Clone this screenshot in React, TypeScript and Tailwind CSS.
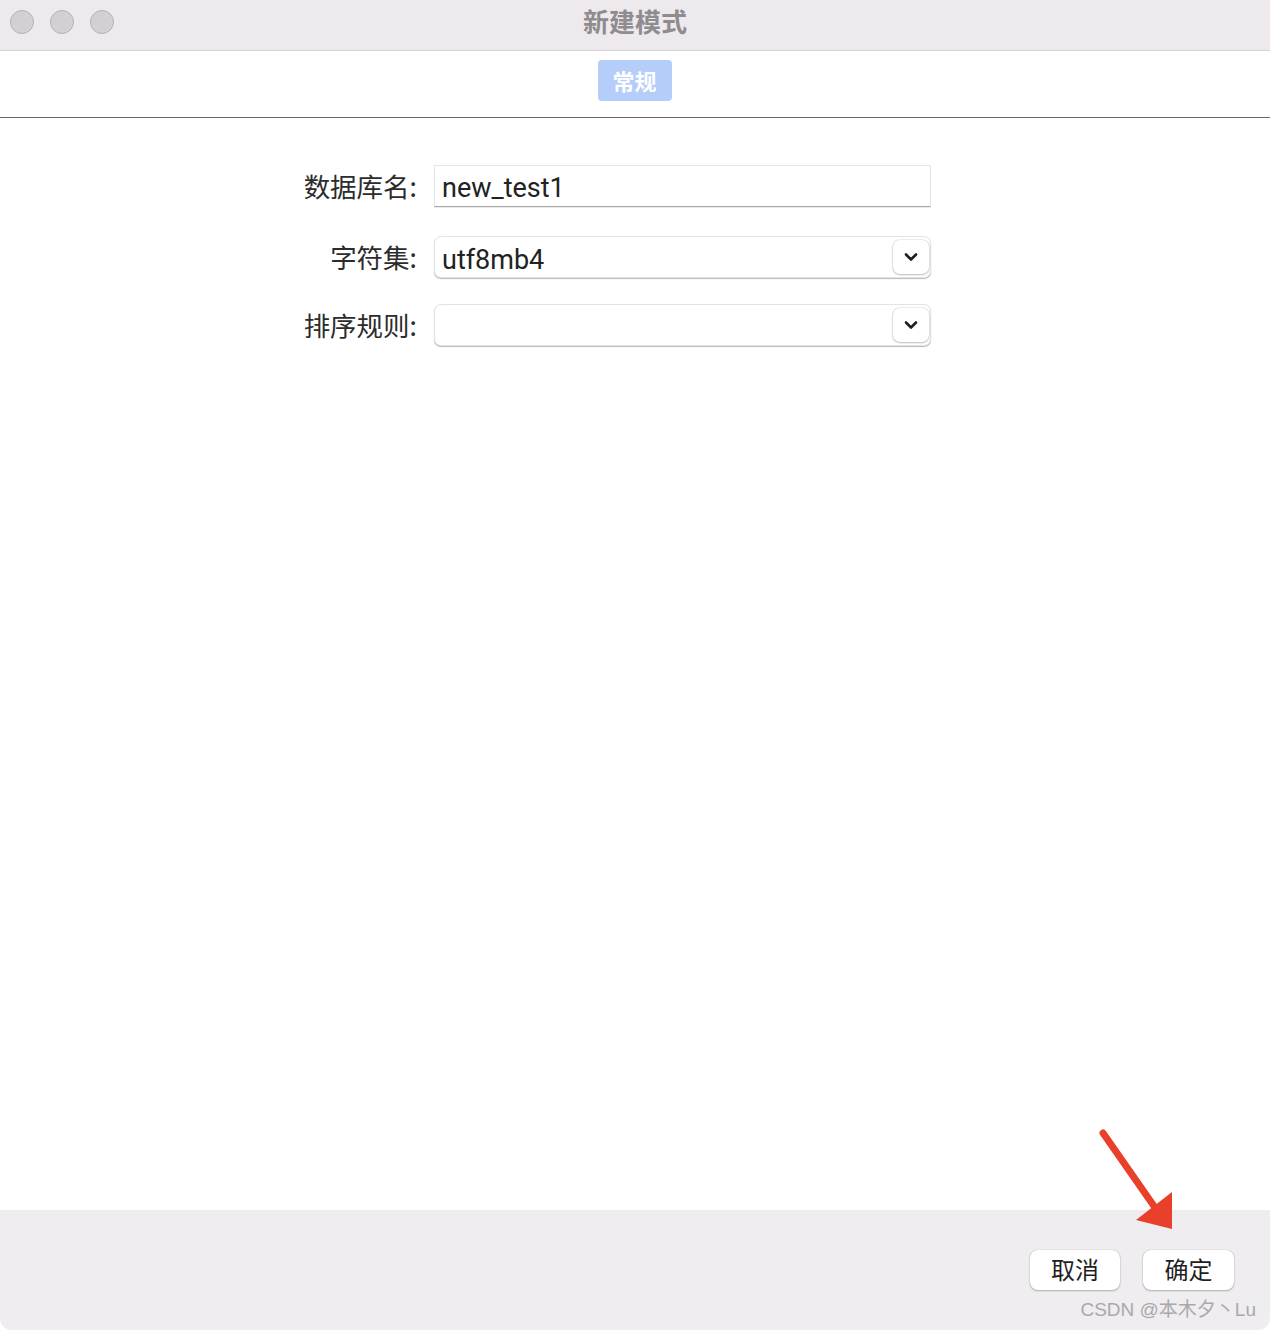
import React from 'react';

const FONT = '"Noto Sans CJK SC", "Liberation Sans", sans-serif';
const LATIN = 'Roboto, "Noto Sans CJK SC", sans-serif';

const Chevron = () => (
  <svg width="14" height="10" viewBox="0 0 14 10" fill="none">
    <path d="M2 2.5 L7 7.5 L12 2.5" stroke="#1f1f1f" strokeWidth="2.6" strokeLinecap="round" strokeLinejoin="round" />
  </svg>
);

const SelectBox = ({ value }: { value: string }) => (
  <div className="relative flex h-[42px] w-[497px] items-center rounded-[7px] border border-[#e4e2e4] bg-white pl-[7px] shadow-[0_1px_1px_rgba(0,0,0,0.28)]">
    <span className="mt-[6px] text-[27px] leading-none text-[#222]" style={{ fontFamily: LATIN }}>{value}</span>
    <div className="absolute right-[1px] top-[3px] flex h-[34px] w-[36px] items-center justify-center rounded-[7px] bg-white shadow-[0_0_2px_rgba(0,0,0,0.25),0_1px_2px_rgba(0,0,0,0.2)]">
      <Chevron />
    </div>
  </div>
);

export default function App() {
  return (
    <div className="relative flex h-[1330px] w-[1270px] flex-col overflow-hidden rounded-b-[12px] bg-white" style={{ fontFamily: FONT }}>
      {/* title bar */}
      <div className="relative flex h-[51px] items-center border-b border-[#d6d2d6] bg-[#eee9ed]">
        <div className="-mt-[6px] flex gap-[16px] pl-[10px]">
          <div className="h-[24px] w-[24px] rounded-full border border-[#b5b1b5] bg-[#d3cfd3]" />
          <div className="h-[24px] w-[24px] rounded-full border border-[#b5b1b5] bg-[#d3cfd3]" />
          <div className="h-[24px] w-[24px] rounded-full border border-[#b5b1b5] bg-[#d3cfd3]" />
        </div>
        <div className="absolute left-0 right-0 top-[0px] text-center text-[26px] font-bold leading-[42px] text-[#8f8b8f]">
          新建模式
        </div>
      </div>

      {/* tab strip */}
      <div className="flex h-[67px] justify-center border-b border-[#6a6a6a] pt-[9px]">
        <div className="-ml-[1px] flex h-[41px] w-[74px] items-center justify-center rounded-[4px] bg-[#b4cdf9] text-[22px] font-bold text-white">
          常规
        </div>
      </div>

      {/* form */}
      <div className="flex flex-1 flex-col gap-[29px] pt-[47px]">
        <div className="flex items-center">
          <div className="w-[417px] text-right text-[26.5px] text-[#2c2c2c]">数据库名:</div>
          <div className="ml-[17px] flex h-[42px] w-[497px] items-center border border-[#e6e4e6] border-b-[#a8a8a8] bg-white pl-[7px] shadow-[0_1px_0_rgba(0,0,0,0.08)]">
            <span className="mt-[4px] text-[27px] leading-none text-[#222]" style={{ fontFamily: LATIN }}>new_test1</span>
          </div>
        </div>
        <div className="flex items-center">
          <div className="w-[417px] text-right text-[26.5px] text-[#2c2c2c]">字符集:</div>
          <div className="ml-[17px]"><SelectBox value="utf8mb4" /></div>
        </div>
        <div className="-mt-[3px] flex items-center">
          <div className="w-[417px] text-right text-[26.5px] text-[#2c2c2c]">排序规则:</div>
          <div className="ml-[17px]"><SelectBox value="" /></div>
        </div>
      </div>

      {/* footer */}
      <div className="relative h-[120px] bg-[#efedf0]">
        <div className="flex justify-end gap-[23px] pr-[36px] pt-[40px]">
          <div className="flex h-[40px] w-[90px] items-center justify-center rounded-[8px] bg-white pb-[3px] text-[24px] text-[#1f1f1f] shadow-[0_0_1px_rgba(0,0,0,0.3),0_1px_2px_rgba(0,0,0,0.25)]">取消</div>
          <div className="flex h-[40px] w-[91px] items-center justify-center rounded-[8px] bg-white pb-[3px] text-[24px] text-[#1f1f1f] shadow-[0_0_1px_rgba(0,0,0,0.3),0_1px_2px_rgba(0,0,0,0.25)]">确定</div>
        </div>
        <div className="absolute bottom-[6px] right-[14px] text-[19px] text-[#aaa8ab]" style={{ fontFamily: '"Liberation Sans", "Noto Sans CJK SC", sans-serif' }}>CSDN @本木夕丶Lu</div>
      </div>

      {/* annotation arrow */}
      <svg className="pointer-events-none absolute left-[1090px] top-[1122px]" width="100" height="115" viewBox="0 0 100 115">
        <line x1="13" y1="11" x2="66" y2="87" stroke="#e8402a" strokeWidth="7" strokeLinecap="round" />
        <polygon points="46,98 82,70 82,107" fill="#e8402a" />
      </svg>
    </div>
  );
}
